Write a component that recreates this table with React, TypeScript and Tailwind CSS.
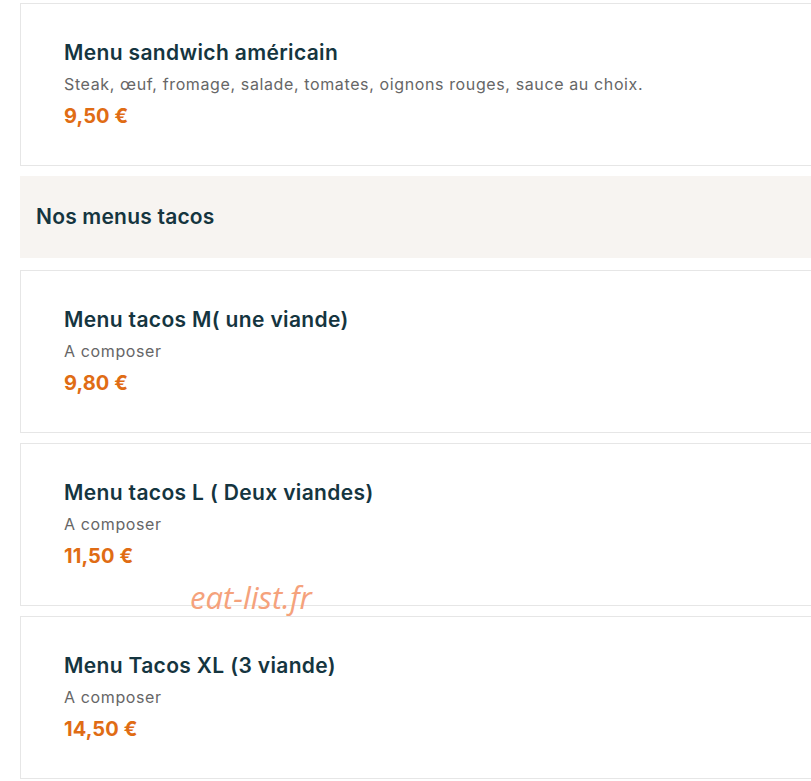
import React from "react";

const items = [
  { title: "Menu sandwich américain", desc: "Steak, œuf, fromage, salade, tomates, oignons rouges, sauce au choix.", price: "9,50 €" },
];
const tacos = [
  { title: "Menu tacos M( une viande)", desc: "A composer", price: "9,80 €" },
  { title: "Menu tacos L ( Deux viandes)", desc: "A composer", price: "11,50 €" },
  { title: "Menu Tacos XL (3 viande)", desc: "A composer", price: "14,50 €" },
];

function Card({ title, desc, price }: { title: string; desc: string; price: string }) {
  return (
    <div className="h-[163px] border border-[#e6e6e6] bg-white pl-[43px] pt-[35px] flex flex-col">
      <div className="h-[28px] leading-[28px] text-[21px] font-semibold text-[#15353f] tracking-[0.35px]">{title}</div>
      <div className="mt-[6px] h-[22px] leading-[22px] text-[16px] text-[#666666] tracking-[0.62px]">{desc}</div>
      <div className="mt-[8px] h-[26px] leading-[26px] text-[20px] font-bold text-[#e06c14] tracking-[0.1px]">{price}</div>
    </div>
  );
}

export default function App() {
  return (
    <div className="relative w-[811px] h-[781px] bg-white overflow-hidden" style={{ fontFamily: "Inter, 'Noto Sans', sans-serif" }}>
      <div className="ml-[20px] w-[820px] pt-[3px] flex flex-col">
        {items.map((it) => (
          <Card key={it.title} {...it} />
        ))}
        <div className="mt-[10px] h-[82px] bg-[#f7f4f1] flex items-center pl-[16px] pb-[1px] text-[21px] font-semibold text-[#15353f] tracking-[0.2px]">
          Nos menus tacos
        </div>
        <div className="mt-[12px] flex flex-col gap-[10px]">
          {tacos.map((it) => (
            <Card key={it.title} {...it} />
          ))}
        </div>
      </div>
      <div
        className="absolute left-[190px] top-[582px] text-[31px] italic text-[#f5a27c] leading-none"
        style={{ fontFamily: "'Open Sans', sans-serif" }}
      >
        eat-list.fr
      </div>
    </div>
  );
}
